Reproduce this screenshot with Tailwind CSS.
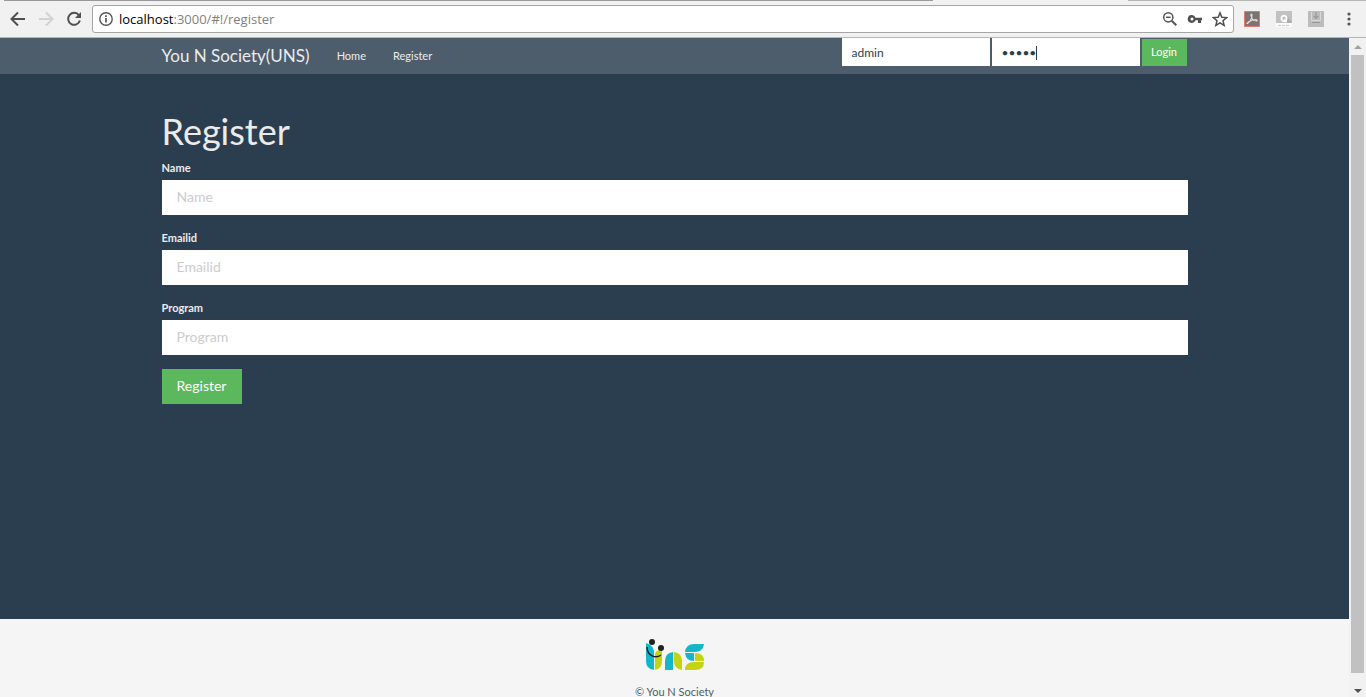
<!DOCTYPE html>
<html lang="en">
<head>
<meta charset="utf-8">
<meta name="viewport" content="width=device-width, initial-scale=1">
<title>You N Society(UNS)</title>
<script src="https://cdn.jsdelivr.net/npm/@tailwindcss/browser@4"></script>
</head>
<body class="flex h-screen flex-col overflow-hidden bg-[#2b3e50] font-['Lato',sans-serif] text-[#ebebeb]">

<!-- Browser toolbar -->
<div class="relative flex h-[38px] shrink-0 items-center border-b border-[#b6b4b6] bg-[#f2f1f2] pl-2 text-[#5a5a5a]">
  <div class="absolute top-0 left-1 h-px w-[68%] bg-[#999999]"></div>
  <div class="absolute top-0 right-0 h-px w-[238px] bg-[#b5b5b5]"></div>
  <button type="button" aria-label="Back" class="flex w-7 pl-0.5"><svg class="h-4 w-4" viewBox="0 0 16 16" fill="none" stroke="#505050" stroke-width="2"><path d="M15 8H2.500M8 1.500L1.500 8l6.500 6.500"/></svg></button>
  <button type="button" aria-label="Forward" class="flex w-7 pl-0.5"><svg class="h-4 w-4" viewBox="0 0 16 16" fill="none" stroke="#d2d2d2" stroke-width="2"><path d="M1 8h13M8 1.500L14.500 8L8 14.500"/></svg></button>
  <button type="button" aria-label="Reload" class="flex w-7 pl-0.5"><svg class="h-4 w-4" viewBox="0 0 16 16" fill="none" stroke="#505050" stroke-width="2"><path d="M13 4.300A6 6 0 1 0 13.900 9.500"/><path d="M15 1v6H9z" fill="#505050" stroke="none"/></svg></button>
  <div class="flex h-7 min-w-0 flex-1 items-center rounded-[3px] border border-[#a6a6a6] bg-white pr-[5px] pl-1.5">
    <svg class="mr-1.5 h-[14px] w-[14px] shrink-0" viewBox="0 0 14 14" fill="none" stroke="#555" stroke-width="1.400"><circle cx="7" cy="7" r="6.200"/><path d="M7 6v4.500M7 3.300v1.600" stroke-width="1.700"/></svg>
    <div class="flex-1 font-['Open_Sans','Noto_Sans',sans-serif] text-[13px] leading-5 text-[#808080]"><span class="text-black">localhost</span>:3000/#!/register</div>
    <button type="button" aria-label="Zoom" class="mr-[9px]"><svg class="h-4 w-4" viewBox="0 0 16 16" fill="none" stroke="#555" stroke-width="1.500"><circle cx="6.300" cy="6.300" r="4.600"/><path d="M4 6.300h4.600"/><path d="M9.700 9.700l4.600 4.600" stroke-width="2"/></svg></button>
    <button type="button" aria-label="Saved password" class="mr-[9px]"><svg class="h-4 w-4" viewBox="0 0 16 16"><path fill="#505050" fill-rule="evenodd" d="M5 4a4 4 0 1 0 3.500 5.300H11V12h3V9.300h1V6.700H8.500A4 4 0 0 0 5 4zM5 6.500a1.500 1.500 0 1 1 0 3a1.500 1.500 0 0 1 0-3z"/></svg></button>
    <button type="button" aria-label="Bookmark"><svg class="h-4 w-4" viewBox="0 0 16 16" fill="none" stroke="#505050" stroke-width="1.500"><path d="M8 1.800l1.800 4.400 4.800.4-3.600 3.100 1.100 4.600L8 11.800l-4.100 2.500L5 9.700 1.400 6.600l4.800-.4z"/></svg></button>
  </div>
  <div class="flex w-[132px] shrink-0 items-center pl-2.5">
    <button type="button" aria-label="PDF" class="mr-4"><svg class="h-4 w-4" viewBox="0 0 16 16"><path fill="#7d7472" stroke="#df7a6e" d="M.5.500h15v15H.5z"/><path fill="none" stroke="#ddd" stroke-width="1.200" d="M3 12.500c1.500.5 5-4.500 5-8 0-2-1.500-1.500-1 0 .6 3 3 5.500 5.500 5.500 1.500-.3.500-1.500-1.500-1.300-3 .2-7.500 2-8 3.800z"/></svg></button>
    <button type="button" aria-label="Q" class="mr-4"><svg class="h-4 w-4" viewBox="0 0 16 16"><path fill="#c1c1c1" d="M0 0h16v12H0z"/><path fill="#adadad" d="M10 10l2-4 4 6h-5z"/><path fill="#fafafa" d="M0 12h16v4H0z"/><ellipse cx="8" cy="7.500" rx="2.500" ry="2.900" fill="none" stroke="#fff" stroke-width="1.700"/><path d="M8 8.500l2.500 2.700" stroke="#fff" stroke-width="1.500"/><path d="M2 14.500h12" stroke="#ccc" stroke-dasharray="3 1"/></svg></button>
    <button type="button" aria-label="Download" class="mr-[17px]"><svg class="h-4 w-4" viewBox="0 0 16 16"><path fill="#bcbcbc" d="M0 0h16v16H0z"/><path fill="none" stroke="#d8d8d8" d="M3.500 1v8.500h9V1"/><path fill="none" stroke="#999" stroke-width="1.200" d="M8 1v6M5.800 5L8 7.300 10.200 5M4 11.500h8"/></svg></button>
    <button type="button" aria-label="Menu"><svg class="h-4 w-4" viewBox="0 0 16 16" fill="#555"><circle cx="8" cy="3" r="1.600"/><circle cx="8" cy="8" r="1.600"/><circle cx="8" cy="13" r="1.600"/></svg></button>
  </div>
</div>

<div class="flex min-h-0 flex-1">
  <div class="flex min-w-0 flex-1 flex-col">
    <nav class="h-9 shrink-0 bg-[#4e5d6c]">
      <div class="mx-auto flex max-w-[1026px] items-start">
        <a href="#!/" class="text-[17px] leading-9">You N Society(UNS)</a>
        <a href="#!/home" class="ml-[27px] text-[11px] leading-9">Home</a>
        <a href="#!/register" class="ml-[27px] text-[11px] leading-9">Register</a>
        <form class="mr-px ml-auto flex gap-0.5 text-[#2b3e50]">
          <input type="text" aria-label="Username" value="admin" class="h-7 w-[148px] bg-white px-2.5 text-xs">
          <div class="relative">
            <input type="password" aria-label="Password" value="admin" class="h-7 w-[148px] bg-white px-2.5 text-xs">
            <span class="absolute top-2 left-11 h-3.5 w-px bg-[#2b3e50]"></span>
          </div>
          <button type="button" class="mt-px h-[27px] w-[45px] bg-[#5cb85c] text-[11px] text-white">Login</button>
        </form>
      </div>
    </nav>

    <main class="min-h-0 flex-1 px-4">
      <form class="mx-auto max-w-[1026px] pt-9">
        <h1 class="text-4xl leading-[42px]">Register</h1>
        <label for="name" class="mt-1.5 block text-[11px] leading-5 font-bold">Name</label>
        <input id="name" type="text" placeholder="Name" class="mt-0.5 block h-[35px] w-full bg-white px-[15px] pb-0.5 text-sm text-[#2b3e50] placeholder:text-[#cccccc]">
        <label for="email" class="mt-[13px] block text-[11px] leading-5 font-bold">Emailid</label>
        <input id="email" type="text" placeholder="Emailid" class="mt-0.5 block h-[35px] w-full bg-white px-[15px] pb-0.5 text-sm text-[#2b3e50] placeholder:text-[#cccccc]">
        <label for="program" class="mt-[13px] block text-[11px] leading-5 font-bold">Program</label>
        <input id="program" type="text" placeholder="Program" class="mt-0.5 block h-[35px] w-full bg-white px-[15px] pb-0.5 text-sm text-[#2b3e50] placeholder:text-[#cccccc]">
        <button type="button" class="mt-3.5 h-[35px] w-20 bg-[#5cb85c] pb-0.5 text-sm text-white">Register</button>
      </form>
    </main>

    <footer class="flex h-[78px] shrink-0 flex-col items-center overflow-hidden bg-[#f5f5f5] pt-5 text-[#4e5d6c]">
      <svg class="h-8 w-[60px] shrink-0" viewBox="0 0 60 32" role="img" aria-label="UNS">
        <path fill="#14b6c7" d="M1 4q7 2 8 8v19Q1 30 1 22z"/>
        <path fill="#c3d512" d="M10 15q1-4 7-5v12q0 8-7 9z"/>
        <path fill="#14b6c7" d="M20 31V22q0-8 8-9v18z"/>
        <path fill="#c3d512" d="M29 13q8 1 8 9v9q-8-1-8-9z"/>
        <path fill="#14b6c7" d="M40 13q1-8 9-8h10q-1 8-9 8zM40 14h9v8q-8 0-9-8z"/>
        <path fill="#c3d512" d="M50 14q9 0 9 8h-9zM40 31q0-8 9-8h10q0 8-9 8z"/>
        <path fill="none" stroke="#222" stroke-width="1.500" d="M2 8c0 9 9 12 14 8"/>
        <circle cx="7" cy="3" r="3" fill="#222"/><circle cx="16" cy="9" r="3" fill="#222"/>
      </svg>
      <p class="mt-3 text-[11px] leading-[18px]">© You N Society</p>
    </footer>
  </div>

  <!-- Page scrollbar -->
  <div class="flex w-[17px] shrink-0 flex-col items-center bg-[#f1f1f1]">
    <svg class="h-[17px] w-[17px] shrink-0" viewBox="0 0 17 17"><path fill="#a3a3a3" d="M5 11h8L9 7z"/></svg>
    <div class="w-[13px] flex-1 bg-[#c1c1c1]"></div>
    <div class="flex h-6 shrink-0 items-end"><svg class="h-[17px] w-[17px]" viewBox="0 0 17 17"><path fill="#505050" d="M5 9h8l-4 4z"/></svg></div>
  </div>
</div>
</body>
</html>
